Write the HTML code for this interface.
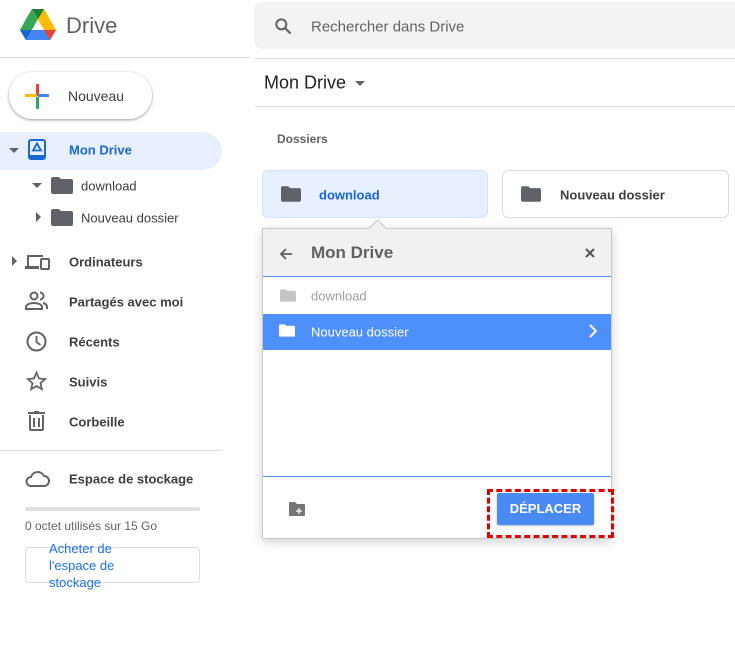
<!DOCTYPE html>
<html><head><meta charset="utf-8"><style>
*{margin:0;padding:0;box-sizing:border-box}
body{width:735px;height:649px;overflow:hidden;background:#fff;font-family:"Liberation Sans",Arial,sans-serif;position:relative;color:#3c4043}
.a{position:absolute}
.t{position:absolute;white-space:nowrap;transform:translateY(-50%)}
.nav{font-size:13px;font-weight:bold;color:#3c4043}
</style></head><body>
<svg class="a" style="left:20px;top:8px" width="37" height="34" viewBox="0 0 37 34">
<polygon points="12,1 6,11 0,22 6,32 18,11" fill="#34a853"/>
<polygon points="12,1 24,1 36,22 24,22" fill="#fbbc04"/>
<polygon points="12,1 18,11 24,1" fill="#188038"/>
<polygon points="6,32 30,32 36,22 12,22" fill="#4285f4"/>
<polygon points="0,22 6,32 12,22" fill="#1967d2"/>
<polygon points="30,32 36,22 24,22" fill="#ea4335"/>
</svg>
<div class="t" style="left:66px;top:26px;font-size:22px;color:#5f6368">Drive</div>
<div class="a" style="left:0;top:57px;width:250px;height:1px;background:#dadce0"></div>
<div class="a" style="left:254px;top:2px;width:490px;height:47px;background:#f1f3f4;border-radius:8px"></div>
<svg class="a" style="left:273px;top:16px" width="20" height="20" viewBox="0 0 24 24"><circle cx="10" cy="10" r="6" fill="none" stroke="#5f6368" stroke-width="2.4"/><line x1="14.5" y1="14.5" x2="21" y2="21" stroke="#5f6368" stroke-width="2.6"/></svg>
<div class="t" style="left:311px;top:27px;font-size:15px;color:#5f6368">Rechercher dans Drive</div>
<div class="a" style="left:255px;top:58px;width:480px;height:1px;background:#dadce0"></div>
<div class="a" style="left:9px;top:72px;width:143px;height:47px;border-radius:24px;background:#fff;box-shadow:0 1px 3px rgba(60,64,67,.35),0 1px 2px rgba(60,64,67,.2)"></div>
<div class="a" style="left:36px;top:84px;width:3px;height:12px;background:#ea4335"></div>
<div class="a" style="left:36px;top:97px;width:3px;height:12px;background:#34a853"></div>
<div class="a" style="left:25px;top:94px;width:12px;height:3px;background:#fbbc04"></div>
<div class="a" style="left:38px;top:94px;width:11px;height:3px;background:#4285f4"></div>
<div class="t" style="left:68px;top:96px;font-size:14px;color:#3c4043">Nouveau</div>
<div class="a" style="left:0;top:132px;width:222px;height:38px;background:#e8f0fe;border-radius:0 19px 19px 0"></div>
<div class="a" style="left:9px;top:148px;border:5px solid transparent;border-top-color:#5f6368;border-bottom:0"></div>
<svg class="a" style="left:28px;top:139px" width="18" height="21" viewBox="0 0 18 21"><rect x="1" y="1" width="16" height="19" rx="2" fill="none" stroke="#1967d2" stroke-width="2"/><rect x="1" y="16" width="16" height="4" fill="#1967d2"/><polygon points="9,4.5 13,11.5 5,11.5" fill="none" stroke="#1967d2" stroke-width="1.8"/></svg>
<div class="t nav" style="left:69px;top:150px;color:#1967d2">Mon Drive</div>
<div class="a" style="left:32px;top:183px;border:5px solid transparent;border-top-color:#5f6368;border-bottom:0"></div>
<svg class="a" style="left:51px;top:177px" width="22" height="17" viewBox="0 0 22 17"><path d="M0 2a2 2 0 0 1 2-2h6l2 2h10a2 2 0 0 1 2 2v11a2 2 0 0 1-2 2H2a2 2 0 0 1-2-2z" fill="#5f6368"/></svg>
<div class="t nav" style="left:81px;top:186px;font-weight:normal;color:#3c4043">download</div>
<div class="a" style="left:36px;top:212px;border:5px solid transparent;border-left-color:#5f6368;border-right:0"></div>
<svg class="a" style="left:51px;top:209px" width="22" height="17" viewBox="0 0 22 17"><path d="M0 2a2 2 0 0 1 2-2h6l2 2h10a2 2 0 0 1 2 2v11a2 2 0 0 1-2 2H2a2 2 0 0 1-2-2z" fill="#5f6368"/></svg>
<div class="t nav" style="left:81px;top:218px;font-weight:normal">Nouveau dossier</div>
<div class="a" style="left:12px;top:256px;border:5px solid transparent;border-left-color:#5f6368;border-right:0"></div>
<svg class="a" style="left:25px;top:254px" width="25" height="16" viewBox="0 0 25 16"><path d="M2 1h16v2H4v9h10v3H0v-3h2z" fill="#5f6368"/><rect x="16" y="5" width="8" height="10" rx="1" fill="none" stroke="#5f6368" stroke-width="2"/></svg>
<div class="t nav" style="left:69px;top:262px">Ordinateurs</div>
<svg class="a" style="left:25px;top:291px" width="24" height="20" viewBox="0 0 24 20"><circle cx="9" cy="5" r="3.5" fill="none" stroke="#5f6368" stroke-width="2"/><path d="M1 18v-2c0-3 5-4 8-4s8 1 8 4v2z" fill="none" stroke="#5f6368" stroke-width="2"/><path d="M15 1.5a3.5 3.5 0 0 1 0 7M18 12c2 .5 4 1.5 4 4v2" fill="none" stroke="#5f6368" stroke-width="2"/></svg>
<div class="t nav" style="left:69px;top:302px">Partagés avec moi</div>
<svg class="a" style="left:26px;top:331px" width="21" height="21" viewBox="0 0 21 21"><circle cx="10.5" cy="10.5" r="9" fill="none" stroke="#5f6368" stroke-width="2"/><path d="M10.5 5v6l4 3" fill="none" stroke="#5f6368" stroke-width="1.8"/></svg>
<div class="t nav" style="left:69px;top:342px">Récents</div>
<svg class="a" style="left:26px;top:371px" width="21" height="20" viewBox="0 0 24 23"><polygon points="12,2 14.9,8.6 22,9.3 16.6,14 18.2,21 12,17.3 5.8,21 7.4,14 2,9.3 9.1,8.6" fill="none" stroke="#5f6368" stroke-width="2"/></svg>
<div class="t nav" style="left:69px;top:382px">Suivis</div>
<svg class="a" style="left:28px;top:411px" width="17" height="20" viewBox="0 0 17 20"><path d="M0 2h17M6 0h5M2 4v14a1 1 0 0 0 1 1h11a1 1 0 0 0 1-1V4M6 7v9M11 7v9" fill="none" stroke="#5f6368" stroke-width="2"/></svg>
<div class="t nav" style="left:69px;top:422px">Corbeille</div>
<div class="a" style="left:0;top:450px;width:222px;height:1px;background:#dadce0"></div>
<svg class="a" style="left:25px;top:470px" width="25" height="17" viewBox="0 0 25 17"><path d="M6 16h13a5 5 0 0 0 0-10 7 7 0 0 0-13 1 4.5 4.5 0 0 0 0 9z" fill="none" stroke="#5f6368" stroke-width="2"/></svg>
<div class="t nav" style="left:69px;top:479px">Espace de stockage</div>
<div class="a" style="left:25px;top:507px;width:175px;height:4px;background:#e0e0e0;border-radius:2px"></div>
<div class="t" style="left:25px;top:526px;font-size:12px;color:#5f6368">0 octet utilisés sur 15 Go</div>
<div class="a" style="left:25px;top:547px;width:175px;height:36px;border:1px solid #dadce0;border-radius:4px"></div>
<div class="a" style="left:49px;top:540px;font-size:13px;line-height:17px;color:#1a73e8;width:110px">Acheter de l'espace de stockage</div>
<div class="t" style="left:264px;top:83px;font-size:18px;color:#202124">Mon Drive</div>
<div class="a" style="left:355px;top:81px;border:5px solid transparent;border-top-color:#5f6368;border-bottom:0"></div>
<div class="a" style="left:255px;top:106px;width:480px;height:1px;background:#dadce0"></div>
<div class="t" style="left:277px;top:139px;font-size:12px;font-weight:bold;color:#5f6368">Dossiers</div>
<div class="a" style="left:262px;top:170px;width:226px;height:48px;background:#e8f0fe;border:1px solid #d2e3fc;border-radius:6px"></div>
<svg class="a" style="left:281px;top:186px" width="20" height="16" viewBox="0 0 22 17"><path d="M0 2a2 2 0 0 1 2-2h6l2 2h10a2 2 0 0 1 2 2v11a2 2 0 0 1-2 2H2a2 2 0 0 1-2-2z" fill="#5f6368"/></svg>
<div class="t" style="left:319px;top:195px;font-size:13px;font-weight:bold;color:#1967d2">download</div>
<div class="a" style="left:502px;top:170px;width:227px;height:48px;border:1px solid #dadce0;border-radius:6px"></div>
<svg class="a" style="left:521px;top:186px" width="20" height="16" viewBox="0 0 22 17"><path d="M0 2a2 2 0 0 1 2-2h6l2 2h10a2 2 0 0 1 2 2v11a2 2 0 0 1-2 2H2a2 2 0 0 1-2-2z" fill="#5f6368"/></svg>
<div class="t" style="left:560px;top:195px;font-size:13px;font-weight:bold;color:#3c4043">Nouveau dossier</div>
<div class="a" style="left:262px;top:228px;width:350px;height:311px;background:#fff;border:1px solid #c8c8c8;box-shadow:0 3px 10px rgba(0,0,0,.18)"></div>
<div class="a" style="left:263px;top:229px;width:348px;height:48px;background:#f1f1f1;border-bottom:1px solid #4d90fe"></div>
<div class="a" style="left:371px;top:222px;width:13px;height:13px;background:#f1f1f1;border-left:1px solid #c8c8c8;border-top:1px solid #c8c8c8;transform:rotate(45deg)"></div>
<svg class="a" style="left:279px;top:247px" width="14" height="14" viewBox="0 0 14 14"><path d="M13 7H2M7 2L2 7l5 5" fill="none" stroke="#616161" stroke-width="1.8"/></svg>
<div class="t" style="left:311px;top:253px;font-size:17px;font-weight:bold;color:#616161">Mon Drive</div>
<svg class="a" style="left:585px;top:248px" width="10" height="10" viewBox="0 0 10 10"><path d="M1 1l8 8M9 1l-8 8" stroke="#555" stroke-width="2"/></svg>
<svg class="a" style="left:280px;top:289px" width="16" height="13" viewBox="0 0 22 17"><path d="M0 2a2 2 0 0 1 2-2h6l2 2h10a2 2 0 0 1 2 2v11a2 2 0 0 1-2 2H2a2 2 0 0 1-2-2z" fill="#c4c4c4"/></svg>
<div class="t" style="left:311px;top:296px;font-size:13px;color:#9e9e9e">download</div>
<div class="a" style="left:263px;top:314px;width:348px;height:36px;background:#4d8ffb"></div>
<svg class="a" style="left:279px;top:324px" width="16" height="13" viewBox="0 0 22 17"><path d="M0 2a2 2 0 0 1 2-2h6l2 2h10a2 2 0 0 1 2 2v11a2 2 0 0 1-2 2H2a2 2 0 0 1-2-2z" fill="#fff"/></svg>
<div class="t" style="left:311px;top:332px;font-size:13px;color:#fff">Nouveau dossier</div>
<svg class="a" style="left:589px;top:324px" width="8" height="14" viewBox="0 0 8 14"><path d="M1 1l6 6-6 6" fill="none" stroke="#fff" stroke-width="2"/></svg>
<div class="a" style="left:263px;top:476px;width:348px;height:1px;background:#4d90fe"></div>
<svg class="a" style="left:289px;top:502px" width="16" height="14" viewBox="0 0 16 14"><path d="M0 1a1 1 0 0 1 1-1h5l2 2h7a1 1 0 0 1 1 1v10a1 1 0 0 1-1 1H1a1 1 0 0 1-1-1z" fill="#757575"/><path d="M10 6v6M7 9h6" stroke="#fff" stroke-width="1.3"/></svg>
<div class="a" style="left:497px;top:493px;width:97px;height:32px;background:#4a8af4;border-radius:2px;box-shadow:0 1px 2px rgba(0,0,0,.25);color:#fff;font-size:13px;font-weight:bold;text-align:center;line-height:32px">DÉPLACER</div>
<div class="a" style="left:487px;top:489px;width:127px;height:49px;border:3px dashed #e00000"></div>
</body></html>
